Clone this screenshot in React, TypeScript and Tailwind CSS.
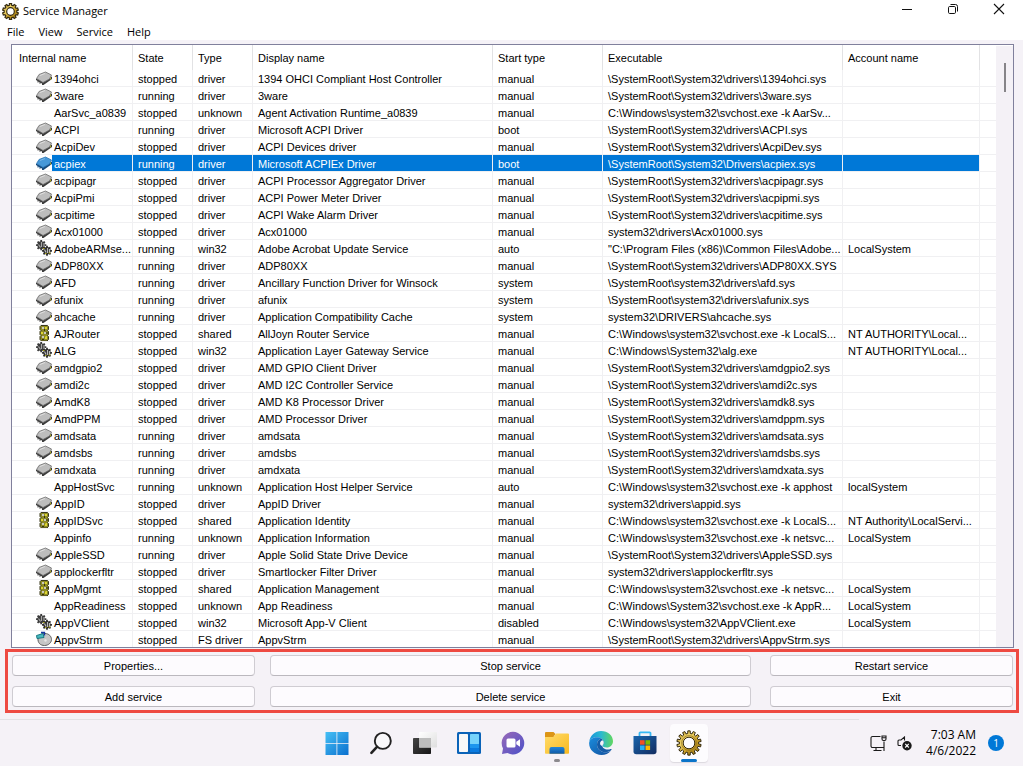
import React from "react";

type Kind = "chip" | "gears" | "stack" | "disk" | "none";

interface Service {
  icon: Kind;
  name: string;
  state: string;
  type: string;
  display: string;
  start: string;
  exe: string;
  account?: string;
}

const svc = (
  icon: Kind,
  name: string,
  state: string,
  type: string,
  display: string,
  start: string,
  exe: string,
  account = "",
): Service => ({ icon, name, state, type, display, start, exe, account });

const drv = (name: string, state: string, display: string, exe: string, start = "manual") =>
  svc("chip", name, state, "driver", display, start, exe);

const ROOT = "\\SystemRoot\\System32\\drivers\\";

const SERVICES: Service[] = [
  drv("1394ohci", "stopped", "1394 OHCI Compliant Host Controller", ROOT + "1394ohci.sys"),
  drv("3ware", "running", "3ware", ROOT + "3ware.sys"),
  svc("none", "AarSvc_a0839", "stopped", "unknown", "Agent Activation Runtime_a0839", "manual", "C:\\Windows\\system32\\svchost.exe -k AarSv..."),
  drv("ACPI", "running", "Microsoft ACPI Driver", ROOT + "ACPI.sys", "boot"),
  drv("AcpiDev", "stopped", "ACPI Devices driver", ROOT + "AcpiDev.sys"),
  drv("acpiex", "running", "Microsoft ACPIEx Driver", "\\SystemRoot\\System32\\Drivers\\acpiex.sys", "boot"),
  drv("acpipagr", "stopped", "ACPI Processor Aggregator Driver", ROOT + "acpipagr.sys"),
  drv("AcpiPmi", "stopped", "ACPI Power Meter Driver", ROOT + "acpipmi.sys"),
  drv("acpitime", "stopped", "ACPI Wake Alarm Driver", ROOT + "acpitime.sys"),
  drv("Acx01000", "stopped", "Acx01000", "system32\\drivers\\Acx01000.sys"),
  svc("gears", "AdobeARMse...", "running", "win32", "Adobe Acrobat Update Service", "auto", "\"C:\\Program Files (x86)\\Common Files\\Adobe...", "LocalSystem"),
  drv("ADP80XX", "running", "ADP80XX", ROOT + "ADP80XX.SYS"),
  drv("AFD", "running", "Ancillary Function Driver for Winsock", "\\SystemRoot\\system32\\drivers\\afd.sys", "system"),
  drv("afunix", "running", "afunix", "\\SystemRoot\\system32\\drivers\\afunix.sys", "system"),
  drv("ahcache", "running", "Application Compatibility Cache", "system32\\DRIVERS\\ahcache.sys", "system"),
  svc("stack", "AJRouter", "stopped", "shared", "AllJoyn Router Service", "manual", "C:\\Windows\\system32\\svchost.exe -k LocalS...", "NT AUTHORITY\\Local..."),
  svc("gears", "ALG", "stopped", "win32", "Application Layer Gateway Service", "manual", "C:\\Windows\\System32\\alg.exe", "NT AUTHORITY\\Local..."),
  drv("amdgpio2", "stopped", "AMD GPIO Client Driver", ROOT + "amdgpio2.sys"),
  drv("amdi2c", "stopped", "AMD I2C Controller Service", ROOT + "amdi2c.sys"),
  drv("AmdK8", "stopped", "AMD K8 Processor Driver", ROOT + "amdk8.sys"),
  drv("AmdPPM", "stopped", "AMD Processor Driver", ROOT + "amdppm.sys"),
  drv("amdsata", "running", "amdsata", ROOT + "amdsata.sys"),
  drv("amdsbs", "running", "amdsbs", ROOT + "amdsbs.sys"),
  drv("amdxata", "running", "amdxata", ROOT + "amdxata.sys"),
  svc("none", "AppHostSvc", "running", "unknown", "Application Host Helper Service", "auto", "C:\\Windows\\system32\\svchost.exe -k apphost", "localSystem"),
  drv("AppID", "stopped", "AppID Driver", "system32\\drivers\\appid.sys"),
  svc("stack", "AppIDSvc", "stopped", "shared", "Application Identity", "manual", "C:\\Windows\\system32\\svchost.exe -k LocalS...", "NT Authority\\LocalServi..."),
  svc("none", "Appinfo", "running", "unknown", "Application Information", "manual", "C:\\Windows\\system32\\svchost.exe -k netsvc...", "LocalSystem"),
  drv("AppleSSD", "running", "Apple Solid State Drive Device", ROOT + "AppleSSD.sys"),
  drv("applockerfltr", "stopped", "Smartlocker Filter Driver", "system32\\drivers\\applockerfltr.sys"),
  svc("stack", "AppMgmt", "stopped", "shared", "Application Management", "manual", "C:\\Windows\\system32\\svchost.exe -k netsvc...", "LocalSystem"),
  svc("none", "AppReadiness", "stopped", "unknown", "App Readiness", "manual", "C:\\Windows\\System32\\svchost.exe -k AppR...", "LocalSystem"),
  svc("gears", "AppVClient", "stopped", "win32", "Microsoft App-V Client", "disabled", "C:\\Windows\\system32\\AppVClient.exe", "LocalSystem"),
  svc("disk", "AppvStrm", "stopped", "FS driver", "AppvStrm", "manual", ROOT + "AppvStrm.sys"),
];

const SELECTED = "acpiex";

function gearPath(cx: number, cy: number, outer: number, inner: number, teeth: number) {
  const points: string[] = [];
  const step = (Math.PI * 2) / teeth;
  for (let i = 0; i < teeth; i++) {
    const a = i * step - Math.PI / 2;
    const corners: [number, number][] = [
      [-0.3, inner],
      [-0.22, outer],
      [0.22, outer],
      [0.3, inner],
    ];
    for (const [t, r] of corners) {
      points.push(`${(cx + r * Math.cos(a + t * step)).toFixed(2)} ${(cy + r * Math.sin(a + t * step)).toFixed(2)}`);
    }
  }
  return `M${points.join("L")}Z`;
}

function GearLogo({ id, small, className }: { id: string; small?: boolean; className: string }) {
  return (
    <svg viewBox="0 0 26 26" className={className} aria-hidden="true">
      <defs>
        <linearGradient id={id} x1="0" y1="0" x2="1" y2="1">
          <stop offset="0" stopColor="#b08a1c" />
          <stop offset=".35" stopColor="#f0d568" />
          <stop offset=".6" stopColor="#c79d24" />
          <stop offset="1" stopColor="#8a6a12" />
        </linearGradient>
      </defs>
      <path
        d={`${small ? gearPath(13, 13, 12.2, 9.8, 10) : gearPath(13, 13, 12.2, 9.6, 14)}M18.8 13a5.8 5.8 0 1 0-11.6 0a5.8 5.8 0 1 0 11.600 0Z`}
        fill={`url(#${id})`}
        fillRule="evenodd"
        stroke="#33290f"
        strokeWidth={small ? 1.8 : 1}
      />
      {!small && <circle cx="13" cy="13" r="7.4" fill="none" stroke="#8d6d1c" strokeWidth=".7" />}
    </svg>
  );
}

function ServiceIcon({ kind, active }: { kind: Kind; active: boolean }) {
  const base = "h-4 w-4 shrink-0";
  if (kind === "chip") {
    return (
      <svg viewBox="0 0 16 16" className={base} aria-hidden="true">
        <path d="M0 8.500v1.500l1.500 1v1.500h1v-1l1 .8v1.500h1v-1l1.500.8v1.400h1.500l8.500-6V6.500l-9 5Z" fill={active ? "#14497b" : "#3c3c3c"} />
        <path d="M.6 8.500L3 4.500L9.500 2l6 3-2 4-6.500 3.500Z" fill={active ? "#4698d8" : "#bdbdbd"} stroke={active ? "#2a74b4" : "#6e6e6e"} strokeWidth=".8" />
        <path d="M4 5.500l5-2" stroke={active ? "#79b8e8" : "#dedede"} />
        <path d="M14.500 7.500v2" stroke="#a8a21e" />
      </svg>
    );
  }
  if (kind === "gears") {
    return (
      <svg viewBox="0 0 16 16" className={base} aria-hidden="true">
        <path d={gearPath(5.2, 5.2, 5.2, 3.9, 8)} fill="#3a3a3a" />
        <path d={gearPath(11, 10.800, 5, 3.8, 8)} fill="#2c2c2c" />
        <path d="M2.500 4.500l2 3M5.500 2v5M8 3v4" stroke="#a8a8a8" strokeWidth="1.200" />
        <path d="M8.500 9.500l1.500 3M11.500 8v5M13.500 9v4" stroke="#b8b8b8" strokeWidth="1.200" />
        <path d="M12.500 13h2M9 13.500h1.500M7 8.500h1.500" stroke="#b5ae1b" strokeWidth="1.200" />
      </svg>
    );
  }
  if (kind === "stack") {
    return (
      <svg viewBox="0 0 16 16" className={base} aria-hidden="true">
        <path d="M5 .5h6.500l1 1v3l-1 1 1 1v3l-1 1 1 1v3l-1.500 1.500H5.500L4 14.500v-3l1-1-1-1v-3l1-1-1-1v-3Z" fill="#8d8a26" stroke="#3a391a" />
        <path d="M6 2h2v2H6ZM8 7h2v2H8ZM6 11h2v2H6Z" fill="#c9c9bd" />
        <path d="M9 2h2v2H9ZM5 7h2v2H5ZM10 11h1v3H9v-2Z" fill="#ded62f" />
        <path d="M8 4h1v2H8ZM10.500 7h1v2h-1ZM6 14h2v1H6Z" fill="#33320f" />
      </svg>
    );
  }
  if (kind === "disk") {
    return (
      <svg viewBox="0 0 16 16" className={base} aria-hidden="true">
        <path d="M2 7C3 4 5 2.500 9 2.500s6.500 3 6.500 6-3 6-7 6-7-2.500-6.500-7.500Z" fill="#c6c6c6" stroke="#5c5c5c" />
        <path d="M.5 4.500L7 2.500l1 4L1 7.500Z" fill="#49b9bf" stroke="#0f6f78" strokeWidth=".9" />
        <path d="M5 1.500h3.500v3" fill="none" stroke="#1436a0" strokeWidth="1.300" />
        <circle cx="9.500" cy="9.500" r="1.200" fill="#e8e8e8" />
      </svg>
    );
  }
  return <span className={base} />;
}

const HEADERS = ["Internal name", "State", "Type", "Display name", "Start type", "Executable", "Account name"];

function ServiceTable() {
  return (
    <table className="w-full table-fixed border-separate border-spacing-0 text-[11px]">
      <colgroup>
        <col className="w-[120px]" />
        <col className="w-[60px]" />
        <col className="w-[60px]" />
        <col className="w-[240px]" />
        <col className="w-[110px]" />
        <col className="w-[240px]" />
        <col className="w-[137px]" />
        <col />
      </colgroup>
      <thead>
        <tr className="h-[25px]">
          {HEADERS.map((h, i) => (
            <th
              key={h}
              scope="col"
              className={`p-0 pt-[2px] text-left font-normal whitespace-nowrap ${i === 0 ? "pl-[7px]" : "border-l border-[#e2e2e4] pl-[5px]"}`}
            >
              {h}
            </th>
          ))}
          <td className="border-l border-[#e2e2e4] p-0" />
        </tr>
      </thead>
      <tbody>
        {SERVICES.map((s, i) => {
          const active = s.name === SELECTED;
          const tone = active ? "bg-[#0078d7] bg-clip-padding text-white" : "";
          const rule = i === SERVICES.length - 1 ? "border-[#f0f0f2]" : "border-b border-[#f0f0f2]";
          const cell = `overflow-hidden border-l p-0 pt-[2px] pl-[5px] leading-[14px] whitespace-nowrap ${rule} ${tone}`;
          return (
            <tr key={s.name} aria-selected={active}>
              <td className={`overflow-hidden p-0 pl-[24px] leading-[14px] whitespace-nowrap ${rule}`}>
                <div className="flex h-4">
                  <ServiceIcon kind={s.icon} active={active} />
                  <span className={`flex-1 pt-[2px] pl-[2px] ${tone}`}>{s.name}</span>
                </div>
              </td>
              <td className={cell}>{s.state}</td>
              <td className={cell}>{s.type}</td>
              <td className={cell}>{s.display}</td>
              <td className={cell}>{s.start}</td>
              <td className={cell}>{s.exe}</td>
              <td className={cell}>{s.account}</td>
              <td className={`border-l p-0 ${rule}`} />
            </tr>
          );
        })}
      </tbody>
    </table>
  );
}

function TitleBar() {
  const control = "flex h-[18px] w-[46px] items-center justify-center";
  return (
    <header className="flex h-[22px] items-start bg-white pr-px">
      <div className="flex h-[22px] flex-1 items-center gap-1 pl-[2px]">
        <GearLogo id="title-gear" small className="h-[17px] w-[17px]" />
        <h1 className="text-[11px] leading-4">Service Manager</h1>
      </div>
      <button className={control} aria-label="Minimize">
        <svg viewBox="0 0 12 12" className="h-3 w-3"><path d="M1 6.500h10" stroke="#111" /></svg>
      </button>
      <button className={control} aria-label="Restore">
        <svg viewBox="0 0 12 12" className="h-3 w-3" fill="none" stroke="#111">
          <rect x="1.500" y="3.500" width="7" height="7" rx="1.200" />
          <path d="M3.500 1.500h5a2 2 0 0 1 2 2v5" />
        </svg>
      </button>
      <button className={control} aria-label="Close">
        <svg viewBox="0 0 12 12" className="h-3 w-3"><path d="M1 1l10 10M11 1L1 11" stroke="#111" strokeWidth="1.100" /></svg>
      </button>
    </header>
  );
}

function MenuBar() {
  return (
    <nav className="flex h-[18px] items-center gap-[14px] bg-white px-[7px] pt-[2px] text-[11px] leading-4">
      {["File", "View", "Service", "Help"].map((m) => (
        <button key={m}>{m}</button>
      ))}
    </nav>
  );
}

function Action({ label, column }: { label: string; column: string }) {
  return (
    <button className={`h-[21px] rounded-[4px] border border-[#cfccd2] border-b-[#bbb8be] bg-[#fdfbfe] text-[11px] leading-[16px] ${column}`}>
      {label}
    </button>
  );
}

function Actions() {
  return (
    <section className="mr-1 ml-[5px] grid grid-cols-[243fr_15px_481fr_19px_243fr] gap-y-[10px] border-3 border-[#ee4a42] py-[3px] pr-[3px] pl-1">
      <Action label="Properties..." column="col-start-1" />
      <Action label="Stop service" column="col-start-3" />
      <Action label="Restart service" column="col-start-5" />
      <Action label="Add service" column="col-start-1" />
      <Action label="Delete service" column="col-start-3" />
      <Action label="Exit" column="col-start-5" />
    </section>
  );
}

function WindowsIcon() {
  return (
    <svg viewBox="0 0 24 24" className="h-6 w-6">
      <defs>
        <linearGradient id="win" x1="0" y1="0" x2="1" y2="1">
          <stop offset="0" stopColor="#45c0f5" />
          <stop offset="1" stopColor="#0a6fce" />
        </linearGradient>
      </defs>
      <path d="M.5 1h11v11H.5ZM12.300 1h11.200v11H12.300ZM.5 12.700h11V24H.5ZM12.300 12.700h11.200V24H12.300Z" fill="url(#win)" />
    </svg>
  );
}

function SearchIcon() {
  return (
    <svg viewBox="0 0 24 24" className="h-6 w-6" fill="none" stroke="#222">
      <circle cx="13.800" cy="9.900" r="8" strokeWidth="1.900" fill="#f9f8fa" />
      <path d="M8 15.800L2.400 21.800" strokeWidth="2.600" strokeLinecap="round" />
    </svg>
  );
}

function TaskViewIcon() {
  return (
    <svg viewBox="0 0 24 24" className="h-6 w-6">
      <defs>
        <linearGradient id="tv" x1="0" y1="0" x2="1" y2="1">
          <stop offset="0" stopColor="#444" />
          <stop offset="1" stopColor="#161616" />
        </linearGradient>
        <linearGradient id="tvw" x1="0" y1="0" x2="1" y2="1">
          <stop offset="0" stopColor="#fff" />
          <stop offset="1" stopColor="#dedede" />
        </linearGradient>
      </defs>
      <rect x="0" y="7" width="18" height="16" rx=".8" fill="url(#tv)" />
      <rect x="6" y="1" width="18" height="15.500" rx=".8" fill="url(#tvw)" />
      <path d="M6 7h12v9.500H6Z" fill="#bcbcbc" />
    </svg>
  );
}

function WidgetsIcon() {
  return (
    <svg viewBox="0 0 24 24" className="h-6 w-6">
      <rect x="0" y="1" width="24" height="22" rx="1.500" fill="#0a63b8" />
      <rect x="2" y="3" width="9" height="18" rx=".8" fill="#f8f8f8" />
      <rect x="13" y="3" width="9" height="10" rx=".6" fill="#76d3fb" />
      <rect x="13" y="13" width="9" height="4" fill="#1c95ee" />
      <rect x="13" y="17" width="9" height="4" rx=".6" fill="#0a7be0" />
    </svg>
  );
}

function ChatIcon() {
  return (
    <svg viewBox="0 0 24 24" className="h-6 w-6">
      <defs>
        <linearGradient id="chat" x1="0" y1="0" x2="1" y2="1">
          <stop offset="0" stopColor="#9a6ab8" />
          <stop offset="1" stopColor="#4b50c8" />
        </linearGradient>
      </defs>
      <path d="M12 .8A11.300 11.300 0 1 1 6.500 22L1 23l1-5.500A11.300 11.300 0 0 1 12 .8Z" fill="url(#chat)" />
      <rect x="5.500" y="7.500" width="9" height="9" rx="1.500" fill="#fff" />
      <path d="M15.300 10.700l3.700-2.500v7.600l-3.700-2.500Z" fill="#fff" />
    </svg>
  );
}

function FolderIcon() {
  return (
    <svg viewBox="0 0 24 24" className="h-6 w-6">
      <defs>
        <linearGradient id="fold" x1="0" y1="0" x2="1" y2="1">
          <stop offset="0" stopColor="#ffdc6b" />
          <stop offset="1" stopColor="#f9b91f" />
        </linearGradient>
        <linearGradient id="foldblue" x1="0" y1="0" x2="0" y2="1">
          <stop offset="0" stopColor="#2386d8" />
          <stop offset="1" stopColor="#0f5aa7" />
        </linearGradient>
      </defs>
      <path d="M0 2a1 1 0 0 1 1-1h7.500l2 2-2 3H0Z" fill="#dc9516" />
      <path d="M0 6h8.500l2.500-3.500h12a1 1 0 0 1 1 1V22a.8.8 0 0 1-.8.8H.8A.8.8 0 0 1 0 22Z" fill="url(#fold)" />
      <path d="M4.500 22.800V18a2 2 0 0 1 2-2h11a2 2 0 0 1 2 2v4.800Z" fill="url(#foldblue)" />
      <path d="M7 20.500h10" stroke="#1566b5" />
    </svg>
  );
}

function EdgeIcon() {
  return (
    <svg viewBox="0 0 24 24" className="h-6 w-6">
      <defs>
        <linearGradient id="edge-top" x1="0" y1=".5" x2="1" y2=".5">
          <stop offset="0" stopColor="#1794dc" />
          <stop offset=".5" stopColor="#2bb9cf" />
          <stop offset="1" stopColor="#62d75f" />
        </linearGradient>
        <linearGradient id="edge-low" x1="0" y1="0" x2="1" y2="1">
          <stop offset="0" stopColor="#1b8ddd" />
          <stop offset="1" stopColor="#114f9d" />
        </linearGradient>
      </defs>
      <path d="M.3 10.500C1.200 4.500 6 0 12 0c7 0 12 4.800 12 10.200 0 3.600-2.800 6.300-6.200 6.300-2.700 0-4.300-1-4.300-2 0-.6 1.200-1.100 1.200-3 0-3-3-5.300-6.700-5.300-4 0-6.700 2-7.700 4.300Z" fill="url(#edge-top)" />
      <path d="M.2 11.500C.7 8.200 4 6.200 8 6.200c1.700 0 3.200.5 4.300 1.300C9.500 8.300 8 10.800 8 13.500c0 4.500 4 7.800 8.500 7.800 2.300 0 4-.7 5.500-1.800-2.200 3-5.800 4.500-9.500 4.500C5.500 24-.5 18.500.2 11.500Z" fill="url(#edge-low)" />
      <path d="M12.300 7.500C9.500 8.300 8 10.800 8 13.500c0 4.500 4 7.800 8.500 7.800 2.300 0 4.300-.9 5.800-2.200.6-.7.100-1.400-.6-1.100-4.200 1.600-8.900-.6-8.200-3.500 0-.6 1.200-1.100 1.200-3 0-1.700-1-3.100-2.400-4Z" fill="#155ba6" />
      <path d="M13.500 14.500c0-.6 1.200-1.100 1.200-3 0-1-.5-1.700-1.200-2.200-1.700.6-2.700 2.100-2.400 3.800.2 1 1 1.800 2.600 2.300Z" fill="#f5f2f7" />
    </svg>
  );
}

function StoreIcon() {
  return (
    <svg viewBox="0 0 24 24" className="h-6 w-6">
      <defs>
        <linearGradient id="store" x1="0" y1="0" x2="1" y2="1">
          <stop offset="0" stopColor="#1965ad" />
          <stop offset="1" stopColor="#132c60" />
        </linearGradient>
      </defs>
      <path d="M6.500 6V2.200a.8.8 0 0 1 .8-.8h9.400a.8.8 0 0 1 .8.8V6" fill="none" stroke="#36b8f4" strokeWidth="1.800" />
      <path d="M.5 5h23v15.500a2.800 2.800 0 0 1-2.800 2.800H3.300A2.800 2.800 0 0 1 .5 20.500Z" fill="url(#store)" />
      <path d="M7 9.200h4.600v4.500H7Z" fill="#f25022" />
      <path d="M12.500 9.200h4.600v4.500h-4.600Z" fill="#7fba00" />
      <path d="M7 14.500h4.600V19H7Z" fill="#28b1f2" />
      <path d="M12.500 14.500h4.600V19h-4.600Z" fill="#ffb900" />
    </svg>
  );
}

function TaskButton({ label, children, mark }: { label: string; children: React.ReactNode; mark?: "open" | "active" }) {
  return (
    <button
      aria-label={label}
      className={`relative flex h-[38px] w-[38px] items-center justify-center rounded-[4px] ${mark === "active" ? "bg-[#fdfcfe] shadow-[0_1px_1px_#dcd9de]" : ""}`}
    >
      {children}
      {mark === "open" && <span className="absolute bottom-0 left-4 h-[3px] w-[6px] rounded-full bg-[#8c8a8e]" />}
      {mark === "active" && <span className="absolute bottom-0 left-[11px] h-[3px] w-4 rounded-full bg-[#0b74c9]" />}
    </button>
  );
}

function Taskbar() {
  return (
    <footer className="bg-[#f5f2f7]">
      <div className="h-px w-[84%] bg-[#e3e1e5]" />
      <div className="grid h-[46px] grid-cols-[1fr_auto_1fr] items-center pl-[2px]">
        <div />
        <div className="flex gap-[6px]">
          <TaskButton label="Start"><WindowsIcon /></TaskButton>
          <TaskButton label="Search"><SearchIcon /></TaskButton>
          <TaskButton label="Task view"><TaskViewIcon /></TaskButton>
          <TaskButton label="Widgets"><WidgetsIcon /></TaskButton>
          <TaskButton label="Chat"><ChatIcon /></TaskButton>
          <TaskButton label="File Explorer" mark="open"><FolderIcon /></TaskButton>
          <TaskButton label="Edge"><EdgeIcon /></TaskButton>
          <TaskButton label="Store"><StoreIcon /></TaskButton>
          <TaskButton label="Service Manager" mark="active"><GearLogo id="task-gear" className="h-[26px] w-[26px]" /></TaskButton>
        </div>
        <div className="flex items-center justify-end gap-3 pr-[19px]">
          <div className="mr-[2px] flex items-center gap-[10px]">
            <svg viewBox="0 0 17 17" className="h-[17px] w-[17px]" fill="none" stroke="#1a1a1a" aria-label="Network">
              <path d="M10.500 1.500H2.500a1.500 1.500 0 0 0-1.500 1.500v8a1.500 1.500 0 0 0 1.500 1.500h11M6 12.500v3M3.500 15.500h8M14 6.500v9.500" strokeWidth="1.100" />
              <path d="M12 1h4v3a1.500 1.500 0 0 1-1.500 1.500h-1A1.500 1.500 0 0 1 12 4ZM12 2.800h4" strokeWidth="1.100" />
            </svg>
            <svg viewBox="0 0 15 15" className="h-[15px] w-[15px]" fill="none" aria-label="Muted">
              <path d="M7.500 4.500V1L4 4H2a1 1 0 0 0-1 1v3.500a1 1 0 0 0 1 1h2" stroke="#1a1a1a" strokeWidth="1.100" />
              <circle cx="10" cy="9.700" r="4.700" fill="#1a1a1a" />
              <path d="M8.200 7.900l3.600 3.600M11.800 7.900l-3.600 3.600" stroke="#fff" strokeWidth="1.100" />
            </svg>
          </div>
          <div className="text-right text-[12px] leading-4">
            <div>7:03 AM</div>
            <div>4/6/2022</div>
          </div>
          <span className="flex h-4 w-4 items-center justify-center rounded-full bg-[#0078d7] text-[10px] leading-4 text-white">1</span>
        </div>
      </div>
    </footer>
  );
}

export default function App() {
  return (
    <div className="flex min-h-screen flex-col bg-[#f5f2f7] font-['Open_Sans','Noto_Sans',sans-serif] text-black">
      <TitleBar />
      <MenuBar />
      <main className="flex flex-1 flex-col gap-px pt-1 font-['Liberation_Sans',Arial,sans-serif]">
        <div className="mr-[9px] ml-[11px] flex border border-[#80809c] bg-white">
          <div className="min-w-0 flex-1 overflow-hidden">
            <ServiceTable />
          </div>
          <div className="mt-px flex w-[17px] justify-center bg-[#f4f1f6] pt-[17px]">
            <div className="h-[29px] w-[2px] bg-[#868488]" />
          </div>
        </div>
        <Actions />
      </main>
      <Taskbar />
    </div>
  );
}
